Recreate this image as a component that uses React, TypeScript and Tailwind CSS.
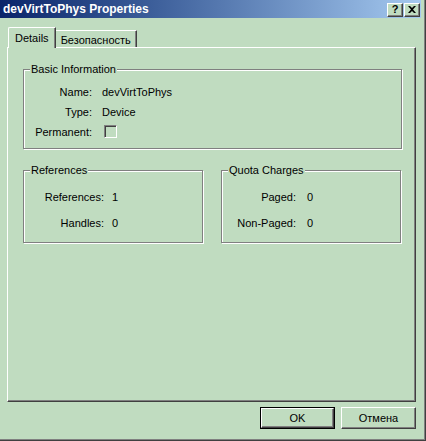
import React from "react";

const raised =
  "border-t border-l border-t-white border-l-white border-r border-b border-r-[#404040] border-b-[#404040] shadow-[inset_-1px_-1px_0_#808080]";

const GroupBox = ({title, className, children}: {title: string; className: string; children: React.ReactNode}) => (
  <div className={`relative border border-[#808080] shadow-[1px_1px_0_#fff,inset_1px_1px_0_#fff] ${className}`}>
    {/* legend over the border */}
    <span className="absolute -top-[8px] left-[6px] px-[1px] bg-[#c0dcc0] leading-[14px]">{title}</span>
    {children}
  </div>
);

const Row = ({label, value}: {label: string; value: React.ReactNode}) => (
  <>
    <span className="text-right">{label}</span>
    <span>{value}</span>
  </>
);

const App = () => {
  return (
    <div
      className="w-[426px] h-[441px] bg-[#c0dcc0] flex flex-col text-[11px] text-black shadow-[inset_-1px_-1px_0_#404040,inset_-2px_-2px_0_#808080]"
      style={{fontFamily: '"Liberation Sans", Arial, sans-serif'}}
    >
      {/* TITLE BAR */}
      <div className="w-[421px] h-[18px] flex items-center justify-between bg-linear-to-r from-[#0a246a] to-[#a6caf0]">
        <span className="pl-[3px] text-white font-bold text-[12px]">devVirtToPhys Properties</span>
        <div className="flex gap-[1px] pr-[1px] mt-[1px]">
          <div className={`w-[16px] h-[14px] bg-[#c0dcc0] flex items-center justify-center font-bold text-[11px] leading-none ${raised}`}>?</div>
          <div className={`w-[16px] h-[14px] bg-[#c0dcc0] flex items-center justify-center ${raised}`}>
            <svg width="8" height="7" viewBox="0 0 8 7">
              <path d="M0 0h2l2 2 2-2h2L5 3.5 8 7H6L4 5 2 7H0l3-3.5z" fill="#000" />
            </svg>
          </div>
        </div>
      </div>

      {/* TABS */}
      <div className="flex items-end pl-[8px] pt-[9px]">
        <div className="relative z-10 -mb-px h-[21px] px-[6px] pt-[2px] bg-[#c0dcc0] border-t border-l border-white rounded-tl-[2px] border-r border-r-[#404040] shadow-[inset_-1px_0_0_#808080]">
          Details
        </div>
        <div className="h-[17px] px-[5px] pt-[1px] border-t border-white border-r border-r-[#404040] shadow-[inset_-1px_0_0_#808080]">
          Безопасность
        </div>
      </div>

      {/* PANEL */}
      <div className="ml-[7px] w-[409px] h-[355px] border-t border-l border-white border-r border-b border-r-[#404040] border-b-[#404040] shadow-[inset_-1px_-1px_0_#808080] pt-[21px] pl-[15px]">
        <GroupBox title="Basic Information" className="w-[379px] h-[80px]">
          <div className="grid grid-cols-[68px_auto] gap-x-[10px] pt-[12px] leading-[20px] w-max">
            <Row label="Name:" value="devVirtToPhys" />
            <Row label="Type:" value="Device" />
            <Row
              label="Permanent:"
              value={
                <span className="inline-block align-middle mt-[-3px] ml-[2px] w-[13px] h-[13px] border border-t-[#808080] border-l-[#808080] border-r-white border-b-white shadow-[inset_1px_1px_0_#404040]" />
              }
            />
          </div>
        </GroupBox>

        <div className="flex gap-[18px] mt-[21px]">
          <GroupBox title="References" className="w-[180px] h-[73px]">
            <div className="grid grid-cols-[80px_auto] gap-x-[8px] pt-[13px] leading-[26px] w-max">
              <Row label="References:" value="1" />
              <Row label="Handles:" value="0" />
            </div>
          </GroupBox>
          <GroupBox title="Quota Charges" className="w-[180px] h-[73px]">
            <div className="grid grid-cols-[74px_auto] gap-x-[11px] pt-[13px] leading-[26px] w-max">
              <Row label="Paged:" value="0" />
              <Row label="Non-Paged:" value="0" />
            </div>
          </GroupBox>
        </div>
      </div>

      {/* BUTTONS */}
      <div className="flex justify-end gap-[6px] pr-[10px] mt-[5px]">
        <div className="w-[75px] h-[22px] border border-black">
          <div className={`w-full h-full flex items-center justify-center ${raised}`}>OK</div>
        </div>
        <div className={`w-[75px] h-[22px] flex items-center justify-center ${raised}`}>Отмена</div>
      </div>
    </div>
  );
};

export default App;
